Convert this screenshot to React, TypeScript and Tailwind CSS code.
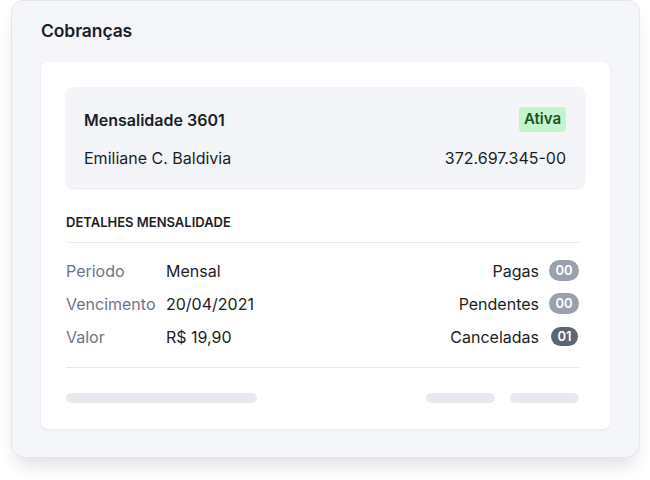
import React from "react";

const details = [
    { label: "Periodo", value: "Mensal" },
    { label: "Vencimento", value: "20/04/2021" },
    { label: "Valor", value: "R$ 19,90" },
];

const counters = [
    { label: "Pagas", count: "00", className: "bg-[#9aa1ac] h-[21px] w-[30px]" },
    { label: "Pendentes", count: "00", className: "bg-[#9aa1ac] h-[21px] w-[30px]" },
    { label: "Canceladas", count: "01", className: "bg-[#5b6574] h-[19px] w-[27px] ml-[2px] mr-[1px]" },
];

const App: React.FC = () => {
    return (
        <div className="w-[650px] h-[480px] bg-white font-['Inter',sans-serif] text-[#1b1e24]">
            <div className="ml-[11px] w-[629px] h-[458px] rounded-b-[14px] rounded-t-[12px] border border-[#e4e6ec] bg-[#f5f6fa] px-[29px] shadow-[0_12px_18px_-6px_rgba(30,40,60,0.16)]">
                <div className="h-[61px] flex items-center text-[17.5px] font-semibold tracking-[-0.1px]">
                    Cobranças
                </div>

                <div className="h-[367px] rounded-[7px] bg-white px-[25px] pt-[25px] shadow-[0_1px_3px_rgba(30,40,60,0.08)]">
                    <div className="h-[101px] rounded-[7px] bg-[#f4f5f9] pl-[18px] pr-[19px] pt-[20px] shadow-[0_1px_2px_rgba(30,40,60,0.1)]">
                        <div className="flex items-center justify-between h-[25px]">
                            <span className="text-[16px] font-semibold">Mensalidade 3601</span>
                            <span className="h-[25px] px-[5px] flex items-center rounded-[4px] bg-[#c4f3cc] text-[15px] font-semibold text-[#1b5224]">
                                Ativa
                            </span>
                        </div>
                        <div className="flex items-center justify-between h-[25px] mt-[13px] text-[16px]">
                            <span>Emiliane C. Baldivia</span>
                            <span>372.697.345-00</span>
                        </div>
                    </div>

                    <div className="pr-[6px]">
                        <div className="h-[55px] flex items-center pt-[16px] border-b border-[#e6e8ec] text-[13px] font-semibold">
                            DETALHES MENSALIDADE
                        </div>

                        <div className="flex justify-between pt-[11px] pb-[14px] border-b border-[#e6e8ec]">
                            <div className="flex flex-col">
                                {details.map((item, key) => (
                                    <div key={key} className="flex items-center h-[33px] text-[16px]">
                                        <span className="w-[100px] text-[#6b7687]">{item.label}</span>
                                        <span>{item.value}</span>
                                    </div>
                                ))}
                            </div>
                            <div className="flex flex-col items-end">
                                {counters.map((item, key) => (
                                    <div key={key} className="flex items-center h-[33px] gap-[10px] text-[16px]">
                                        <span>{item.label}</span>
                                        <span className={`flex items-center justify-center rounded-full text-[13px] font-semibold text-white ${item.className}`}>
                                            {item.count}
                                        </span>
                                    </div>
                                ))}
                            </div>
                        </div>

                        <div className="flex items-center justify-between pt-[25px]">
                            <div className="h-[10px] w-[191px] rounded-full bg-[#e7e9ee]" />
                            <div className="flex gap-[15px]">
                                <div className="h-[10px] w-[69px] rounded-full bg-[#e7e9ee]" />
                                <div className="h-[10px] w-[69px] rounded-full bg-[#e7e9ee]" />
                            </div>
                        </div>
                    </div>
                </div>
            </div>
        </div>
    );
};

export default App;
